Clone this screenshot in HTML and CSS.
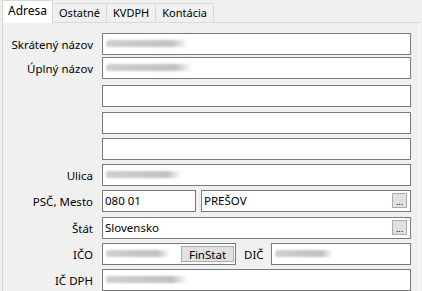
FILE: index.html
```html
<!DOCTYPE html>
<html lang="sk">
<head>
    <meta charset="UTF-8">
    <title>Adresa</title>
    <link rel="stylesheet" href="styles.css">
</head>
<body>
    <div class="tabs">
        <div class="tab active">Adresa</div>
        <div class="tab">Ostatné</div>
        <div class="tab">KVDPH</div>
        <div class="tab">Kontácia</div>
    </div>
    <div class="panel">
        <div class="row">
            <label class="label">Skrátený názov</label>
            <div class="field"><span class="smudge w80"></span></div>
        </div>
        <div class="row tight">
            <label class="label">Úplný názov</label>
            <div class="field"><span class="smudge w84"></span></div>
        </div>
        <div class="row loose">
            <span class="label"></span>
            <div class="field"></div>
        </div>
        <div class="row wide">
            <span class="label"></span>
            <div class="field"></div>
        </div>
        <div class="row">
            <span class="label"></span>
            <div class="field"></div>
        </div>
        <div class="row">
            <label class="label">Ulica</label>
            <div class="field"><span class="smudge w74"></span></div>
        </div>
        <div class="row">
            <label class="label">PSČ, Mesto</label>
            <div class="split">
                <div class="field psc">080 01</div>
                <div class="field city">PREŠOV<button class="dots">...</button></div>
            </div>
        </div>
        <div class="row wide">
            <label class="label">Štát</label>
            <div class="field">Slovensko<button class="dots">...</button></div>
        </div>
        <div class="row">
            <label class="label">IČO</label>
            <div class="split">
                <div class="field ico"><span class="smudge w60"></span><button class="finstat">FinStat</button></div>
                <span class="dic-label">DIČ</span>
                <div class="field dic"><span class="smudge w56"></span></div>
            </div>
        </div>
        <div class="row">
            <label class="label">IČ DPH</label>
            <div class="field"><span class="smudge w80"></span></div>
        </div>
    </div>
</body>
</html>
```

FILE: styles.css
```css
body {
    margin: 0;
    background: #f0f0f0;
    font-family: "Noto Sans", "Open Sans", Arial, sans-serif;
    font-size: 11px;
    color: #000;
    width: 422px;
    height: 291px;
    overflow: hidden;
}
.tabs {
    display: flex;
    align-items: flex-end;
    height: 22px;
    padding-left: 2px;
}
.tab {
    height: 19px;
    line-height: 18px;
    padding: 0 6px;
    border: 1px solid #d9d9d9;
    border-bottom: none;
    margin-left: -1px;
    box-sizing: border-box;
    background: #f0f0f0;
}
.tab:first-child {
    margin-left: 0;
}
.tab.active {
    height: 23px;
    line-height: 20px;
    padding: 0 5px;
    background: #fff;
    position: relative;
    z-index: 1;
    margin-bottom: -1px;
    font-size: 12px;
}
.panel {
    margin-left: 2px;
    width: 418px;
    height: 280px;
    border: 1px solid #d9d9d9;
    border-bottom: none;
    border-right-color: #fbfbfb;
    background: #f0f0f0;
    box-sizing: border-box;
    padding: 10px 8px 0 0;
}
.row {
    display: grid;
    grid-template-columns: 90px 1fr;
    column-gap: 9px;
    align-items: center;
    height: 22px;
    margin-top: 4px;
}
.row:first-child {
    margin-top: 0;
}
.row.tight {
    margin-top: 2px;
}
.row.loose {
    margin-top: 6px;
}
.row.wide {
    margin-top: 5px;
}
.label {
    text-align: right;
    white-space: nowrap;
    font-size: 11.5px;
}
.field {
    position: relative;
    height: 22px;
    line-height: 19px;
    border: 1px solid #7a7a7a;
    background: #fff;
    box-sizing: border-box;
    padding-left: 2px;
    white-space: nowrap;
    font-size: 11.5px;
}
.split {
    display: flex;
    align-items: center;
}
.psc {
    width: 94px;
}
.city {
    flex: 1;
    margin-left: 5px;
}
.ico {
    width: 134px;
}
.dic-label {
    margin: 0 7px 0 8px;
    font-size: 11.5px;
}
.dic {
    flex: 1;
}
.dots {
    position: absolute;
    right: 3px;
    top: 2px;
    width: 15px;
    height: 15px;
    padding: 0;
    border: 1px solid #adadad;
    background: #e1e1e1;
    font-family: inherit;
    font-size: 9px;
    line-height: 15px;
    color: #000;
}
.finstat {
    position: absolute;
    right: 1px;
    top: 2px;
    width: 53px;
    height: 16px;
    padding: 0;
    border: 1px solid #adadad;
    background: #e1e1e1;
    font-family: inherit;
    font-size: 11.5px;
    line-height: 13px;
    color: #000;
}
.smudge {
    position: absolute;
    left: 3px;
    top: 6px;
    height: 7px;
    border-radius: 2px;
    background: linear-gradient(to right, #cdd1cd, #bcc2bc 80%, rgba(200, 205, 200, 0));
    filter: blur(0.9px);
}
.w56 { width: 58px; }
.w60 { width: 64px; }
.w74 { width: 76px; }
.w80 { width: 82px; }
.w84 { width: 86px; }
```
